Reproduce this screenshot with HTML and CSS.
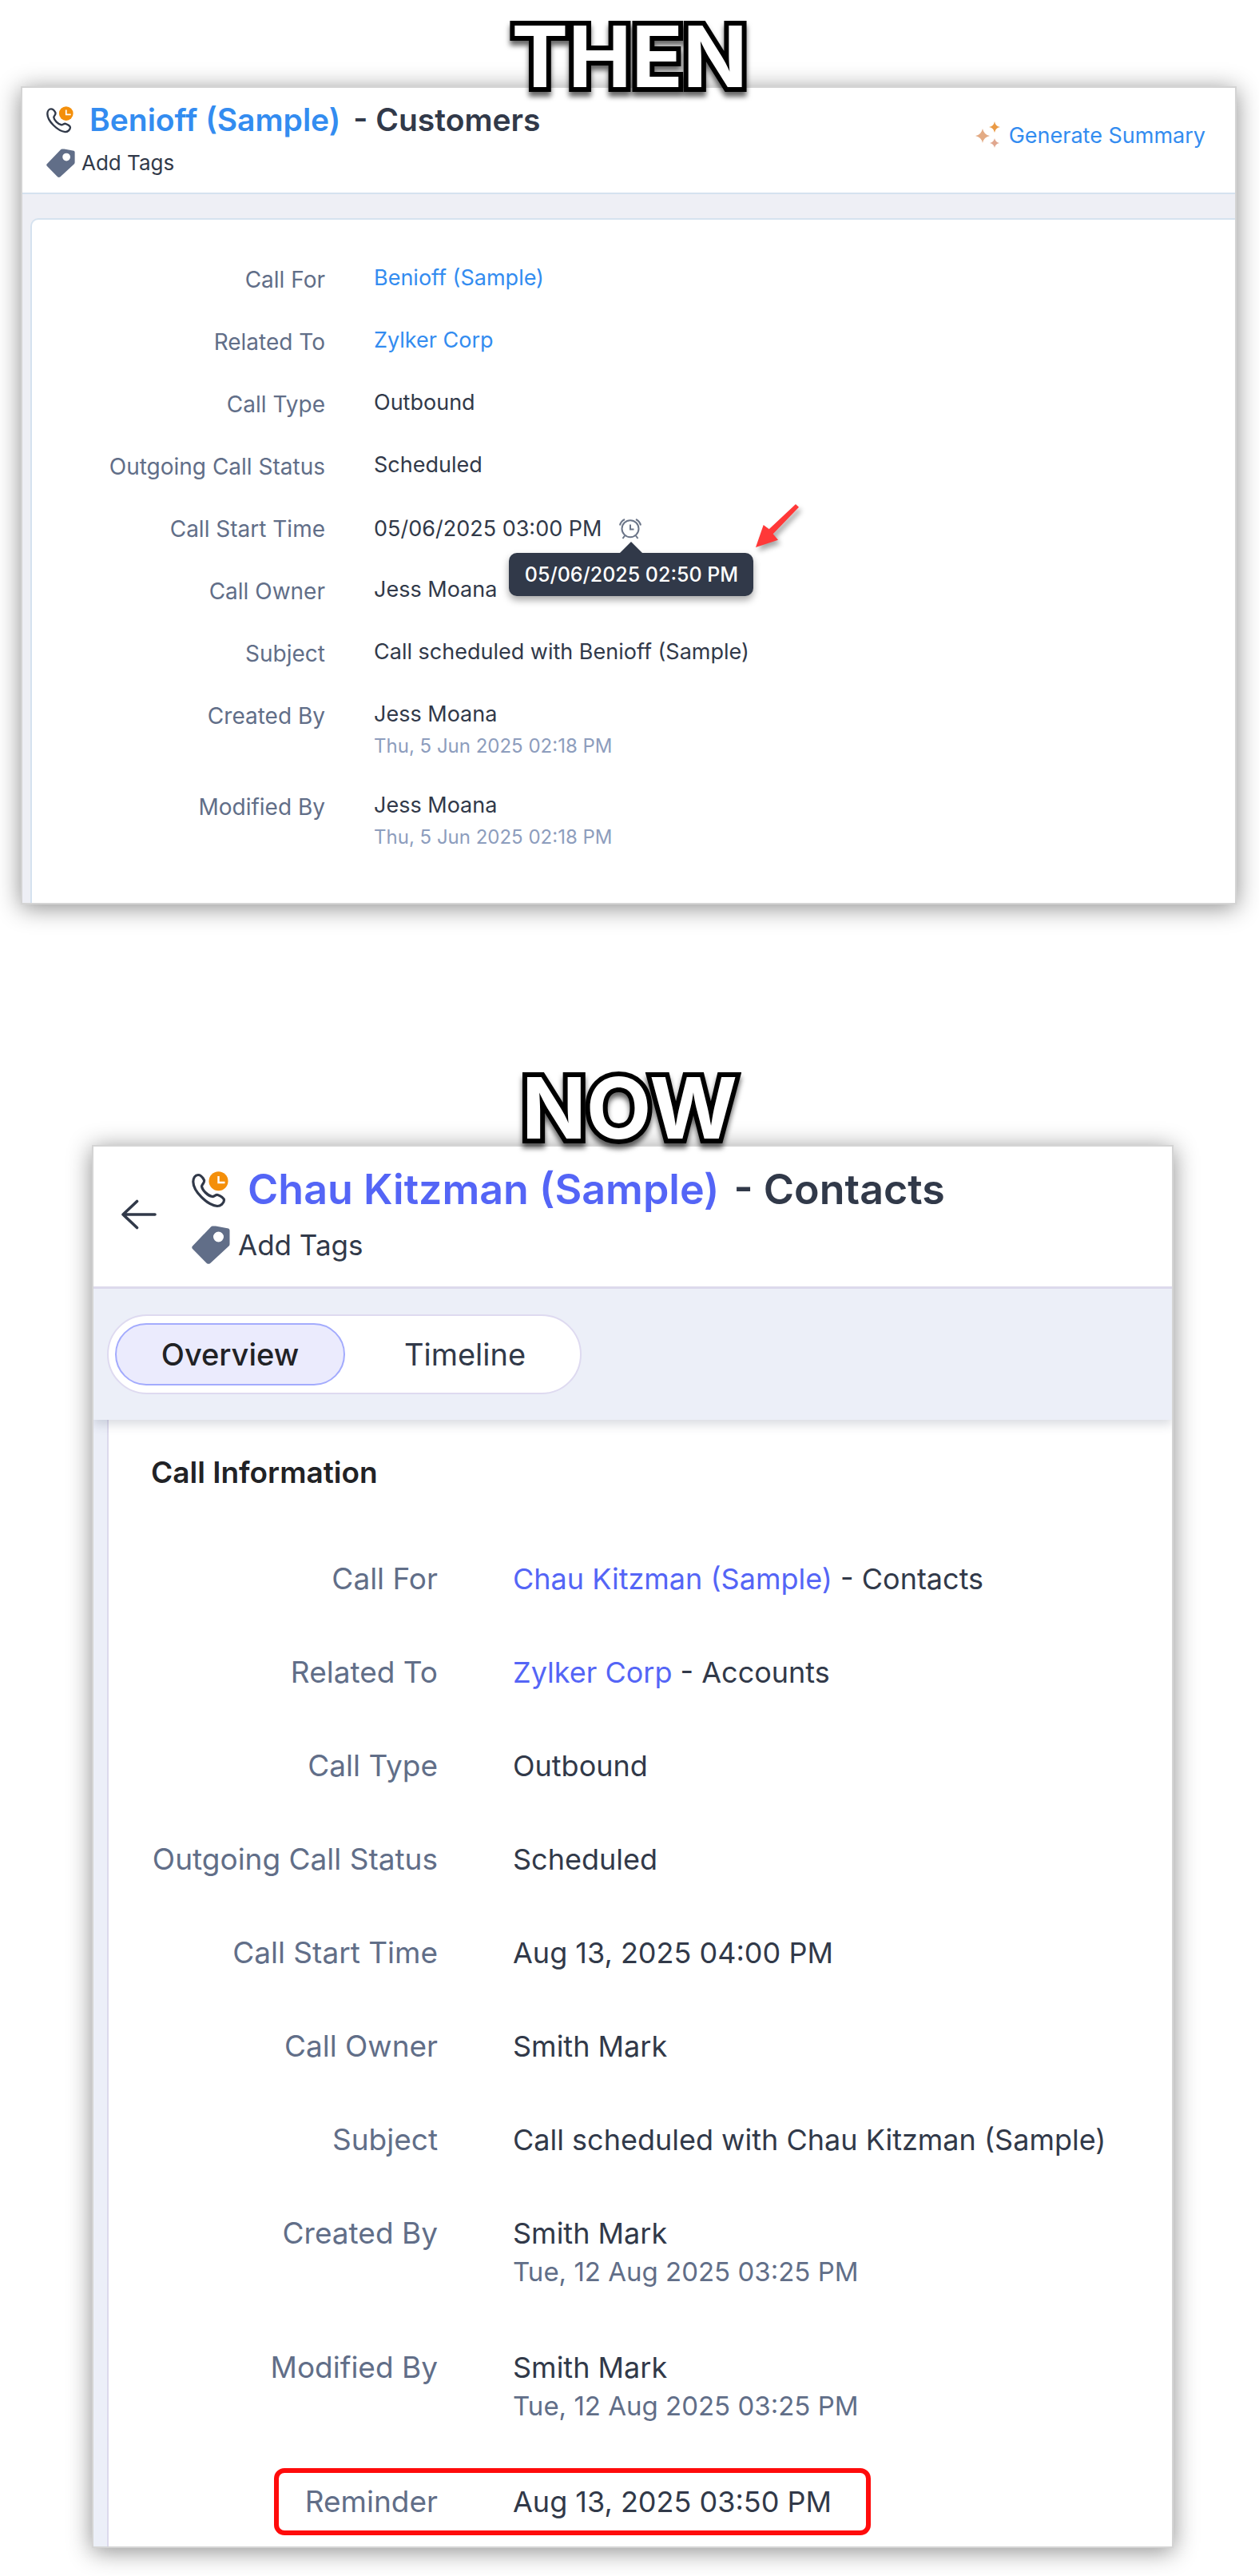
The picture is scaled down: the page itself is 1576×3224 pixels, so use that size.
FILE: index.html
```html
<!DOCTYPE html>
<html lang="en">
<head>
  <meta charset="UTF-8" />
  <meta name="viewport" content="width=device-width, initial-scale=1.0" />
  <title>Call Reminder - Then and Now</title>
  <link rel="stylesheet" href="styles.css">
</head>
<body>
  <!-- shared icons -->
  <svg class="sprite" aria-hidden="true">
    <symbol id="phone" viewBox="0 0 46 46">
      <path d="M8 4.5C11.5 4.5 14 8 15.5 11C16.5 14 13 16 12.5 18.5C13 23.5 20 30.5 25.5 31.5C28 32 29.5 29 32.5 29.5C36 30.5 40.5 33.5 40.5 36C40.5 40 36 43.5 32 43.5C19 42 2 25 1.8 13C1.8 8 4.5 4.5 8 4.5Z" fill="none" stroke="#313949" stroke-width="3.2" />
      <circle cx="33.5" cy="12.3" r="12" fill="#f48f0a" />
      <path d="M33.5 6v8h8" fill="none" stroke="#fff" stroke-width="2.4" />
    </symbol>
    <symbol id="tag" viewBox="0 0 48 48">
      <path fill-rule="evenodd" fill="#616e88" d="M26 .5H30L46 3.5Q47.5 4 47.5 6V23Q47.5 24.5 46.5 25.5L23 47.2Q21 48.5 19 47.2L1 29Q-.5 27 1 25.5L24 1.5Q25 .5 26 .5ZM33.5 7.5A6.5 6.5 0 1 0 33.5 20.5A6.5 6.5 0 1 0 33.5 7.5Z" />
    </symbol>
  </svg>

  <section>
    <h1>THEN</h1>
    <div class="card then">
      <header>
        <div class="record">
          <div class="name">
            <svg class="phone"><use href="#phone" /></svg>
            <h2><a href="#">Benioff (Sample)</a> <span>- Customers</span></h2>
          </div>
          <button type="button" class="tags"><svg class="tag"><use href="#tag" /></svg>Add Tags</button>
        </div>
        <button type="button" class="summary">
          <svg class="sparkles" viewBox="0 0 32 34">
            <path fill="#e3ab84" d="M9 9Q10.5 16.5 18 18Q10.5 19.5 9 27Q7.5 19.5 0 18Q7.5 16.5 9 9Z" />
            <path fill="#ea9a45" d="M24 0Q25 6 31 7Q25 8 24 14Q23 8 17 7Q23 6 24 0Z" />
            <path fill="#e0a78f" d="M24 21Q25 26 30 27Q25 28 24 33Q23 28 18 27Q23 26 24 21Z" />
          </svg>
          Generate Summary
        </button>
      </header>
      <div class="body">
        <dl class="panel">
          <div class="row"><dt>Call For</dt><dd><a href="#">Benioff (Sample)</a></dd></div>
          <div class="row"><dt>Related To</dt><dd><a href="#">Zylker Corp</a></dd></div>
          <div class="row"><dt>Call Type</dt><dd>Outbound</dd></div>
          <div class="row"><dt>Outgoing Call Status</dt><dd>Scheduled</dd></div>
          <div class="row">
            <dt>Call Start Time</dt>
            <dd class="start">
              05/06/2025 03:00 PM
              <span class="alarm">
                <svg class="clock" viewBox="0 0 28 26">
                  <g fill="none" stroke="#6b7588" stroke-width="2">
                    <circle cx="14" cy="12.7" r="10.5" />
                    <path d="M14 7.5V13.5H18.5M1 8.5Q2 3.5 7 1M27 8.5Q26 3.5 21 1M7 21.5L4.5 25M21 21.5L23.5 25" />
                  </g>
                </svg>
                <span class="tooltip" role="tooltip">05/06/2025 02:50 PM</span>
                <svg class="pointer" viewBox="0 0 54 54">
                  <path fill="#ff3838" d="M0 54L9.7 26L16.7 31.3L50 0L54 3.7L21.7 37.3L28 44.7Z" />
                </svg>
              </span>
            </dd>
          </div>
          <div class="row"><dt>Call Owner</dt><dd>Jess Moana</dd></div>
          <div class="row"><dt>Subject</dt><dd>Call scheduled with Benioff (Sample)</dd></div>
          <div class="row"><dt>Created By</dt><dd>Jess Moana<small>Thu, 5 Jun 2025 02:18 PM</small></dd></div>
          <div class="row"><dt>Modified By</dt><dd>Jess Moana<small>Thu, 5 Jun 2025 02:18 PM</small></dd></div>
        </dl>
      </div>
    </div>
  </section>

  <section>
    <h1 class="second">NOW</h1>
    <div class="card now">
      <header>
        <button type="button" class="back" aria-label="Back">
          <svg class="arrow" viewBox="0 0 44 38">
            <path d="M42 19H2M19.5 2.5L2 19L19.5 35.5" fill="none" stroke="#313949" stroke-width="3.6" stroke-linecap="round" stroke-linejoin="round" />
          </svg>
        </button>
        <div class="record">
          <div class="name">
            <svg class="phone"><use href="#phone" /></svg>
            <h2><a href="#">Chau Kitzman (Sample)</a> <span>- Contacts</span></h2>
          </div>
          <button type="button" class="tags"><svg class="tag"><use href="#tag" /></svg>Add Tags</button>
        </div>
      </header>
      <nav>
        <div class="tabs">
          <button type="button" class="active">Overview</button>
          <button type="button">Timeline</button>
        </div>
      </nav>
      <div class="body">
        <div class="panel">
          <h3>Call Information</h3>
          <dl>
            <div class="row"><dt>Call For</dt><dd><a href="#">Chau Kitzman (Sample)</a> - Contacts</dd></div>
            <div class="row"><dt>Related To</dt><dd><a href="#">Zylker Corp</a> - Accounts</dd></div>
            <div class="row"><dt>Call Type</dt><dd>Outbound</dd></div>
            <div class="row"><dt>Outgoing Call Status</dt><dd>Scheduled</dd></div>
            <div class="row"><dt>Call Start Time</dt><dd>Aug 13, 2025 04:00 PM</dd></div>
            <div class="row"><dt>Call Owner</dt><dd>Smith Mark</dd></div>
            <div class="row"><dt>Subject</dt><dd>Call scheduled with Chau Kitzman (Sample)</dd></div>
            <div class="row"><dt>Created By</dt><dd>Smith Mark<small>Tue, 12 Aug 2025 03:25 PM</small></dd></div>
            <div class="row"><dt>Modified By</dt><dd>Smith Mark<small>Tue, 12 Aug 2025 03:25 PM</small></dd></div>
            <div class="row reminder"><dt>Reminder</dt><dd>Aug 13, 2025 03:50 PM</dd></div>
          </dl>
        </div>
      </div>
    </div>
  </section>
</body>
</html>
```
FILE: styles.css
```css
*, *::before, *::after {
  box-sizing: border-box;
}
body {
  margin: 0;
  padding-bottom: 35px;
  background: #fff;
  color: #313949;
  font-family: Inter, sans-serif;
}
h1, h2, h3, dl, dd {
  margin: 0;
}
a {
  text-decoration: none;
}
button {
  padding: 0;
  border: 0;
  background: none;
  color: inherit;
  font-family: inherit;
  cursor: pointer;
}
svg {
  display: block;
  flex: none;
}
.sprite {
  display: none;
}

/* outlined captions that sit over the top edge of each card */
h1 {
  position: relative;
  z-index: 2;
  padding-top: 34px;
  font-size: 106px;
  font-weight: 700;
  line-height: 74px;
  text-align: center;
  color: #fff;
  -webkit-text-stroke: 12px #000;
  paint-order: stroke fill;
  stroke-linejoin: round;
  filter: drop-shadow(0 6px 3px rgba(0, 0, 0, 0.6));
}
h1.second {
  margin-top: 184px;
  margin-bottom: 9px;
}

.card {
  border: 2px solid #d4d4d4;
  background: #fff;
  box-shadow: 0 4px 28px rgba(0, 0, 0, 0.45);
}
.card header {
  display: flex;
  align-items: flex-start;
}
.name, .tags {
  display: flex;
  align-items: center;
}
h2 {
  display: flex;
  font-weight: 600;
}
.row {
  display: grid;
}
dt {
  color: #616e88;
  text-align: right;
}
small {
  display: block;
}

/* old layout */
.then {
  margin: 0 28px 0 26px;
}
.then a, .summary {
  color: #338cf0;
}
.then header {
  justify-content: space-between;
  padding: 16px 37px 17px 30px;
  border-bottom: 2px solid #d5e2ef;
}
.then .name {
  gap: 20px;
}
.then .phone {
  width: 34px;
  height: 34px;
}
.then h2 {
  gap: 16px;
  font-size: 39px;
  line-height: 48px;
}
.then .tags {
  gap: 8px;
  margin-top: 10px;
  font-size: 26px;
  line-height: 40px;
}
.then .tag {
  width: 36px;
  height: 36px;
}
.summary {
  display: flex;
  gap: 10px;
  margin-top: 26px;
  font-size: 27px;
  line-height: 36px;
}
.sparkles {
  width: 32px;
  height: 34px;
}
.then .body {
  padding: 30px 0 0 10px;
  background: #eeeff5;
}
.then .panel {
  display: grid;
  gap: 30px;
  padding: 51px 0 60px;
  border: solid #d5e2ef;
  border-width: 2px 0 0 2px;
  border-radius: 10px 0 0 0;
  background: #fff;
}
.then .row {
  grid-template-columns: 367px 1fr;
  column-gap: 61px;
}
.then dt {
  font-size: 28px;
  line-height: 48px;
}
.then dd {
  font-size: 27px;
  line-height: 44px;
}
.then small {
  padding-bottom: 4px;
  color: #8d9dbd;
  font-size: 24px;
  line-height: 36px;
}
.start {
  display: flex;
  align-items: center;
  gap: 22px;
}
.alarm {
  position: relative;
}
.clock {
  width: 28px;
  height: 26px;
}
.tooltip {
  position: absolute;
  top: 43px;
  left: -138px;
  width: 306px;
  border-radius: 10px;
  background: #313949;
  box-shadow: 0 5px 10px rgba(0, 0, 0, 0.35);
  color: #fff;
  font-size: 25px;
  font-weight: 500;
  line-height: 54px;
  text-align: center;
}
.tooltip::before {
  content: "";
  position: absolute;
  bottom: 100%;
  left: 139px;
  border: 14px solid transparent;
  border-top: 0;
  border-bottom-color: #313949;
}
.pointer {
  position: absolute;
  top: -18px;
  left: 171px;
  width: 54px;
  height: 54px;
  filter: drop-shadow(3px 5px 3px rgba(0, 0, 0, 0.35));
}

/* new layout */
.now {
  margin: 0 107px 0 115px;
}
.now a {
  color: #5465f6;
}
.now header {
  gap: 44px;
  padding: 24px 35px 28px;
  border-bottom: 3px solid #dcd9ec;
}
.back {
  margin-top: 42px;
}
.arrow {
  width: 44px;
  height: 38px;
}
.now .name {
  gap: 24px;
}
.now .phone {
  width: 46px;
  height: 46px;
}
.now h2 {
  gap: 18px;
  font-size: 52px;
  line-height: 60px;
}
.now .tags {
  gap: 10px;
  margin-top: 15px;
  font-size: 35px;
  line-height: 48px;
}
.now .tag {
  width: 48px;
  height: 48px;
}
nav {
  position: relative;
  display: flex;
  padding: 32px 17px;
  background: #eceff8;
  box-shadow: 0 6px 12px rgba(50, 60, 90, 0.18);
  clip-path: inset(0 0 -30px 0);
}
.tabs {
  display: flex;
  gap: 6px;
  padding: 9px 0 9px 8px;
  border: 2px solid #dedaf0;
  border-radius: 50px;
  background: #fff;
}
.tabs button {
  width: 288px;
  border: 2px solid transparent;
  border-radius: 40px;
  font-size: 38px;
  line-height: 74px;
}
.tabs .active {
  border-color: #a3abfd;
  background: #ebebfd;
  color: #212225;
  font-weight: 500;
}
.now .body {
  padding-left: 17px;
  background: #eceff8;
}
.now .panel {
  padding: 42px 0 31px 53px;
  border-left: 2px solid #dcd9ec;
  background: #fff;
}
h3 {
  margin-bottom: 84px;
  color: #212225;
  font-size: 37px;
  font-weight: 600;
  line-height: 48px;
}
.now dl {
  display: grid;
  gap: 67px;
}
.now .row {
  grid-template-columns: 359px 1fr;
  column-gap: 94px;
}
.now dt {
  font-size: 37px;
  line-height: 50px;
}
.now dd {
  font-size: 36px;
  line-height: 50px;
}
.now small {
  padding-bottom: 5px;
  color: #616e88;
  font-size: 33px;
  line-height: 46px;
}
.reminder {
  position: relative;
}
.reminder::after {
  content: "";
  position: absolute;
  top: -17px;
  bottom: -17px;
  left: 154px;
  width: 747px;
  border: 6px solid #ff0b0b;
  border-radius: 13px;
}
```
